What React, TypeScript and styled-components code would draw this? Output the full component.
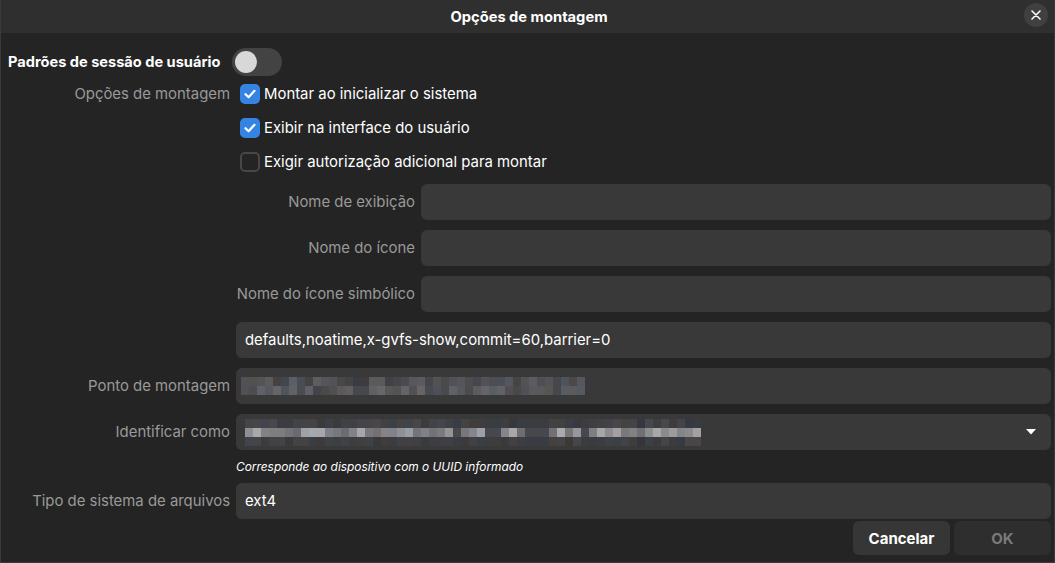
import React from "react";
import styled, { createGlobalStyle } from "styled-components";

const Global = createGlobalStyle`
  html, body { margin: 0; padding: 0; background: #242424; }
  body { font-family: Inter, "Noto Sans", sans-serif; }
  * { box-sizing: border-box; }
`;

const Window = styled.div`
  width: 1055px;
  height: 563px;
  background: #242424;
  border: 1px solid #3a3a3a;
  border-top: none;
  display: flex;
  flex-direction: column;
  color: #ffffff;
  font-size: 14.9px;
  overflow: hidden;
`;

const Header = styled.div`
  height: 33px;
  flex: none;
  background: #2f2f2f;
  display: flex;
  align-items: center;
  justify-content: center;
  position: relative;
`;

const Title = styled.div`
  font-weight: 700;
  font-size: 14.7px;
  color: #ffffff;
  padding-left: 3px;
`;

const CloseButton = styled.div`
  position: absolute;
  right: 6px;
  top: 3px;
  width: 24px;
  height: 24px;
  border-radius: 50%;
  background: #404040;
  display: flex;
  align-items: center;
  justify-content: center;
`;

const Body = styled.div`
  flex: 1;
  padding: 15px 3px 0 0;
  display: flex;
  flex-direction: column;
`;

const ToggleRow = styled.div`
  display: flex;
  align-items: center;
  gap: 12px;
  padding-left: 7px;
  height: 28px;
`;

const StrongLabel = styled.div`
  font-weight: 700;
  font-size: 14.6px;
  color: #ffffff;
`;

const Track = styled.div`
  width: 50px;
  height: 28px;
  border-radius: 14px;
  background: #434343;
  padding: 3px;
  display: flex;
  align-items: center;
`;

const Knob = styled.div`
  width: 22px;
  height: 22px;
  border-radius: 50%;
  background: #d8d8d8;
`;

const Form = styled.div`
  margin-top: 8px;
  display: grid;
  grid-template-columns: 229px 1fr;
  column-gap: 6px;
  row-gap: 10px;
  align-items: center;
`;

const Label = styled.div<{ $top?: boolean }>`
  color: #999999;
  text-align: right;
  font-size: 14.9px;
  line-height: 20px;
  white-space: nowrap;
  align-self: ${(p) => (p.$top ? "start" : "center")};
`;

const Checks = styled.div`
  display: flex;
  flex-direction: column;
  gap: 14px;
  padding-left: 4px;
  margin-bottom: 2px;
`;

const CheckRow = styled.div`
  display: flex;
  align-items: center;
  gap: 4px;
  height: 20px;
  font-size: 14.9px;
  color: #ffffff;
`;

const Box = styled.div<{ $on: boolean }>`
  width: 20px;
  height: 20px;
  border-radius: 5px;
  background: ${(p) => (p.$on ? "#3584e4" : "transparent")};
  border: ${(p) => (p.$on ? "none" : "2px solid #474747")};
  display: flex;
  align-items: center;
  justify-content: center;
`;

const Inner = styled.div`
  display: grid;
  grid-template-columns: 179px 1fr;
  column-gap: 6px;
  row-gap: 10px;
  align-items: center;
`;

const Field = styled.div`
  height: 36px;
  border-radius: 6px;
  background: #393939;
  display: flex;
  align-items: center;
  padding: 0 9px;
  color: #ffffff;
  font-size: 14.9px;
`;

const ComboField = styled(Field)`
  justify-content: space-between;
  padding: 0 15px 0 9px;
`;

const Hint = styled.div`
  font-style: italic;
  font-size: 11.9px;
  line-height: 13px;
  color: #ffffff;
`;

const Mosaic = styled.div<{ $cols: number }>`
  display: grid;
  grid-template-columns: repeat(${(p) => p.$cols}, 8px);
  grid-auto-rows: 9px;
`;

const Cell = styled.span`
  display: block;
`;

const Footer = styled.div`
  margin-top: 2px;
  display: flex;
  justify-content: flex-end;
  gap: 4px;
`;

const Button = styled.div<{ $disabled?: boolean }>`
  width: 97px;
  height: 34px;
  border-radius: 6px;
  background: ${(p) => (p.$disabled ? "#2e2e2e" : "#363636")};
  color: ${(p) => (p.$disabled ? "#7a7a7a" : "#ffffff")};
  font-weight: 700;
  font-size: 15px;
  display: flex;
  align-items: center;
  justify-content: center;
`;

function rng(seed: number) {
  let s = seed;
  return () => {
    s = (s * 1103515245 + 12345) & 0x7fffffff;
    return s / 0x7fffffff;
  };
}

function grayHex(v: number, tint: number) {
  const c = (x: number) => Math.max(0, Math.min(255, Math.round(x))).toString(16).padStart(2, "0");
  return `#${c(v + tint)}${c(v)}${c(v - tint + 4)}`;
}

function makeMosaic(seed: number, cols: number, rows: [number, number][], gaps: number[]) {
  const r = rng(seed);
  const cells: string[] = [];
  rows.forEach(([lo, hi], ri) => {
    for (let i = 0; i < cols; i++) {
      const gap = gaps.includes(i);
      let v = lo + r() * (hi - lo);
      if (gap) v = ri === 1 ? 72 : 60;
      const tint = (r() - 0.5) * 8;
      cells.push(grayHex(v, tint));
    }
  });
  return cells;
}

const pontoCells = makeMosaic(7, 43, [[64, 94], [68, 104]], [14, 15]);
const idCells = makeMosaic(19, 57, [[56, 72], [105, 170], [54, 70]], [26, 30, 31, 35, 36, 37, 42]);

const Check = () => (
  <svg width="14" height="14" viewBox="0 0 14 14">
    <path d="M2.5 7.2 L5.6 10.2 L11.5 3.8" fill="none" stroke="#fff" strokeWidth="2.2" strokeLinecap="round" strokeLinejoin="round" />
  </svg>
);

export default function App() {
  return (
    <>
      <Global />
      <Window>
        <Header>
          <Title>Opções de montagem</Title>
          <CloseButton>
            <svg width="10" height="10" viewBox="0 0 10 10">
              <path d="M1 1 L9 9 M9 1 L1 9" stroke="#fff" strokeWidth="1.6" strokeLinecap="round" />
            </svg>
          </CloseButton>
        </Header>
        <Body>
          <ToggleRow>
            <StrongLabel>Padrões de sessão de usuário</StrongLabel>
            <Track>
              <Knob />
            </Track>
          </ToggleRow>
          <Form>
            <Label $top>Opções de montagem</Label>
            <Checks>
              <CheckRow>
                <Box $on><Check /></Box>
                Montar ao inicializar o sistema
              </CheckRow>
              <CheckRow>
                <Box $on><Check /></Box>
                Exibir na interface do usuário
              </CheckRow>
              <CheckRow>
                <Box $on={false} />
                Exigir autorização adicional para montar
              </CheckRow>
            </Checks>

            <div />
            <Inner>
              <Label>Nome de exibição</Label>
              <Field />
              <Label>Nome do ícone</Label>
              <Field />
              <Label>Nome do ícone simbólico</Label>
              <Field />
            </Inner>

            <div />
            <Field>defaults,noatime,x-gvfs-show,commit=60,barrier=0</Field>

            <Label>Ponto de montagem</Label>
            <Field style={{ paddingLeft: 5 }}>
              <Mosaic $cols={43}>
                {pontoCells.map((c, i) => (
                  <Cell key={i} style={{ background: c }} />
                ))}
              </Mosaic>
            </Field>

            <Label>Identificar como</Label>
            <ComboField>
              <Mosaic $cols={57}>
                {idCells.map((c, i) => (
                  <Cell key={i} style={{ background: c }} />
                ))}
              </Mosaic>
              <svg width="10" height="6" viewBox="0 0 10 6">
                <path d="M0 0 L10 0 L5 5.5 Z" fill="#fff" />
              </svg>
            </ComboField>

            <div />
            <Hint>Corresponde ao dispositivo com o UUID informado</Hint>

            <Label>Tipo de sistema de arquivos</Label>
            <Field>ext4</Field>
          </Form>
          <Footer>
            <Button>Cancelar</Button>
            <Button $disabled>OK</Button>
          </Footer>
        </Body>
      </Window>
    </>
  );
}
